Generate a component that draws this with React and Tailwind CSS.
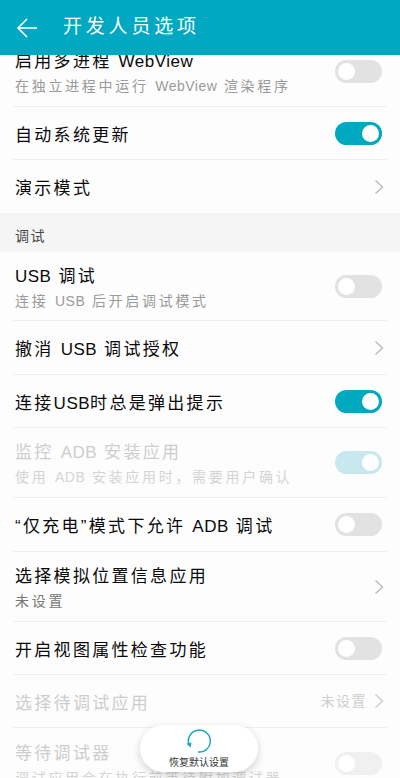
import React from "react";

const cjk = "font-['Liberation_Sans','Noto_Sans_CJK_SC',sans-serif]";

// latin runs are much tighter than the wide-spaced chinese ones
const L = ({ children }) => <span className="tracking-[0.5px]">{children}</span>;

const Toggle = ({ on, disabled }) => {
  let track = "bg-[#e2e2e2]";
  if (on) track = disabled ? "bg-[#c6e8ee]" : "bg-[#00a8c0]";
  else if (disabled) track = "bg-[#f0f0f0]";
  return (
    <div className={`flex h-[23px] w-[47px] shrink-0 items-center rounded-full px-[3px] ${track} ${on ? "justify-end" : "justify-start"}`}>
      <div className="h-[17px] w-[17px] rounded-full bg-white" />
    </div>
  );
};

const Chevron = ({ color = "#bdbdbd" }) => (
  <svg width="10" height="16" viewBox="0 0 10 16" fill="none" className="-mr-[2px] shrink-0">
    <path d="M1.5 1.5L8.5 8L1.5 14.5" stroke={color} strokeWidth="1.5" />
  </svg>
);

const Row = ({ title, sub, height, disabled, right, last }) => (
  <div className={`mx-[13px] flex items-center justify-between pl-[2px] pr-[5px] ${height} ${last ? "" : "border-b border-[#eeeeee]"}`}>
    <div className="min-w-0 whitespace-nowrap pt-[5px]">
      <div className={`text-[17px] leading-[24px] tracking-[2.3px] ${disabled ? "text-[#cdcdcd]" : "text-[#0a0a0a]"}`}>{title}</div>
      {sub && (
        <div className={`text-[14px] leading-[24px] tracking-[2.7px] ${disabled ? "text-[#d4d4d4]" : "text-[#9a9a9a]"}`}>{sub}</div>
      )}
    </div>
    {right}
  </div>
);

export default function App() {
  return (
    <div className={`relative flex h-[778px] w-[400px] flex-col overflow-hidden bg-[#fdfdfd] ${cjk}`}>
      <header className="z-10 flex h-[55px] shrink-0 items-center bg-[#00a9c1] pl-[16px]">
        <svg width="22" height="22" viewBox="0 0 22 22" fill="none">
          <path d="M21 11H2M11 2L2 11L11 20" stroke="white" strokeWidth="1.6" />
        </svg>
        <h1 className="ml-[25px] text-[19px] tracking-[3.8px] text-white">开发人员选项</h1>
      </header>

      <div className="-mt-[18px] flex flex-col">
        <Row
          height="h-[70px]"
          title={<>启用多进程 <L>WebView</L></>}
          sub={<>在独立进程中运行 <L>WebView</L> 渲染程序</>}
          right={<Toggle />}
        />
        <Row height="h-[53px]" title="自动系统更新" right={<Toggle on />} />
        <Row height="h-[53px]" title="演示模式" right={<Chevron />} last />

        <div className="flex h-[39px] items-end bg-[#f5f5f5] px-[15px] pb-[4px] text-[14px] leading-[24px] tracking-[1.5px] text-[#444444]">调试</div>

        <Row
          height="h-[69px]"
          title={<><L>USB</L> 调试</>}
          sub={<>连接 <L>USB</L> 后开启调试模式</>}
          right={<Toggle />}
        />
        <Row height="h-[54px]" title={<>撤消 <L>USB</L> 调试授权</>} right={<Chevron />} />
        <Row height="h-[53px]" title={<>连接<L>USB</L>时总是弹出提示</>} right={<Toggle on />} />
        <Row
          height="h-[70px]"
          disabled
          title={<>监控 <L>ADB</L> 安装应用</>}
          sub={<>使用 <L>ADB</L> 安装应用时，需要用户确认</>}
          right={<Toggle on disabled />}
        />
        <Row height="h-[54px]" title={<>“仅充电”模式下允许 <L>ADB</L> 调试</>} right={<Toggle />} />
        <Row
          height="h-[70px]"
          title="选择模拟位置信息应用"
          sub={<span className="text-[#777777]">未设置</span>}
          right={<Chevron />}
        />
        <Row height="h-[53px]" title="开启视图属性检查功能" right={<Toggle />} />
        <Row
          height="h-[53px]"
          disabled
          title="选择待调试应用"
          right={
            <div className="flex items-center gap-[7px]">
              <span className="text-[14px] tracking-[1.5px] text-[#cfcfcf]">未设置</span>
              <Chevron color="#cfcfcf" />
            </div>
          }
        />
        <Row
          height="h-[70px]"
          disabled
          last
          title="等待调试器"
          sub="调试应用会在执行前等待附加调试器"
          right={<Toggle disabled />}
        />
      </div>

      {/* floating restore button */}
      <button className="absolute left-[140px] top-[725px] z-20 flex h-[47px] w-[118px] flex-col items-center rounded-full bg-white pt-[3px] shadow-[0_3px_8px_rgba(0,0,0,0.18)]">
        <svg width="26" height="26" viewBox="0 0 26 26" fill="none" className="-ml-[2px]">
          <path d="M4.5 18A11 11 0 1 1 13 24" stroke="#1ba9bf" strokeWidth="1.5" />
          <path d="M1.5 15.5L6.5 14.5L5.5 19.5Z" fill="#1ba9bf" />
        </svg>
        <span className="mt-[2px] text-[10px] leading-[14px] text-[#333333]">恢复默认设置</span>
      </button>
    </div>
  );
}
